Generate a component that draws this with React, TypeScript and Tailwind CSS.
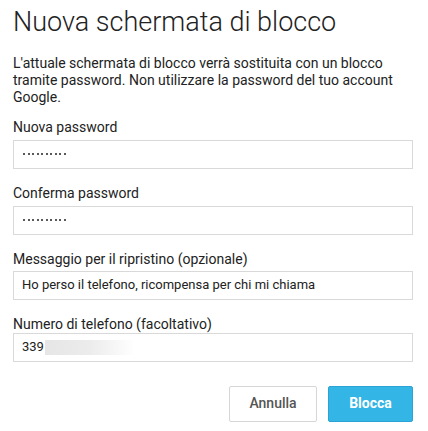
import React from "react";

const font = { fontFamily: "Roboto, 'Noto Sans', sans-serif" };

function Label({ children, className = "" }: { children: React.ReactNode; className?: string }) {
  return <div className={`text-[14px] leading-[16px] text-[#222] ${className}`}>{children}</div>;
}

function Box({ children, className = "" }: { children?: React.ReactNode; className?: string }) {
  return (
    <div className={`h-[29px] w-full border border-[#d9d9d9] bg-white flex items-center pl-[8px] text-[13px] text-[#222] ${className}`}>
      {children}
    </div>
  );
}

function Dots() {
  return (
    <div className="flex gap-[2.5px] items-center ml-[1px]">
      {Array.from({ length: 10 }).map((_, i) => (
        <span key={i} className="block w-[2px] h-[2px] rounded-full bg-[#222]" />
      ))}
    </div>
  );
}

export default function App() {
  return (
    <div className="w-[428px] h-[431px] bg-white pl-[13px] pr-[15px] pt-[7px]" style={font}>
      <h1 className="font-light text-[27px] leading-[31px] text-[#222]">Nuova schermata di blocco</h1>
      <p className="mt-[16.5px] text-[14px] leading-[17px] text-[#222] pr-[18px]">
        L'attuale schermata di blocco verrà sostituita con un blocco tramite password. Non utilizzare la password del tuo account Google.
      </p>
      <div className="mt-[13.5px]">
        <Label>Nuova password</Label>
        <Box className="mt-[4.5px]">
          <Dots />
        </Box>
      </div>
      <div className="mt-[16.5px]">
        <Label>Conferma password</Label>
        <Box className="mt-[4.5px]">
          <Dots />
        </Box>
      </div>
      <div className="mt-[16.5px]">
        <Label>Messaggio per il ripristino (opzionale)</Label>
        <Box className="mt-[3.5px]">Ho perso il telefono, ricompensa per chi mi chiama</Box>
      </div>
      <div className="mt-[16.5px]">
        <Label>Numero di telefono (facoltativo)</Label>
        <Box className="mt-[0.5px]">
          <span>339</span>
          <span className="ml-[1px] block h-[15px] w-[90px] bg-gradient-to-r from-[#e6e6e6] via-[#ececec] to-white" />
        </Box>
      </div>
      <div className="mt-[24px] flex justify-end gap-[11px]">
        <button className="w-[88px] h-[36px] border border-[#d6d6d6] rounded-[2px] bg-white text-[14px] font-medium text-[#555]">
          Annulla
        </button>
        <button className="w-[85px] h-[36px] border border-[#2ba3d3] rounded-[2px] bg-[#33b5e5] text-[14px] font-bold text-white">
          Blocca
        </button>
      </div>
    </div>
  );
}
